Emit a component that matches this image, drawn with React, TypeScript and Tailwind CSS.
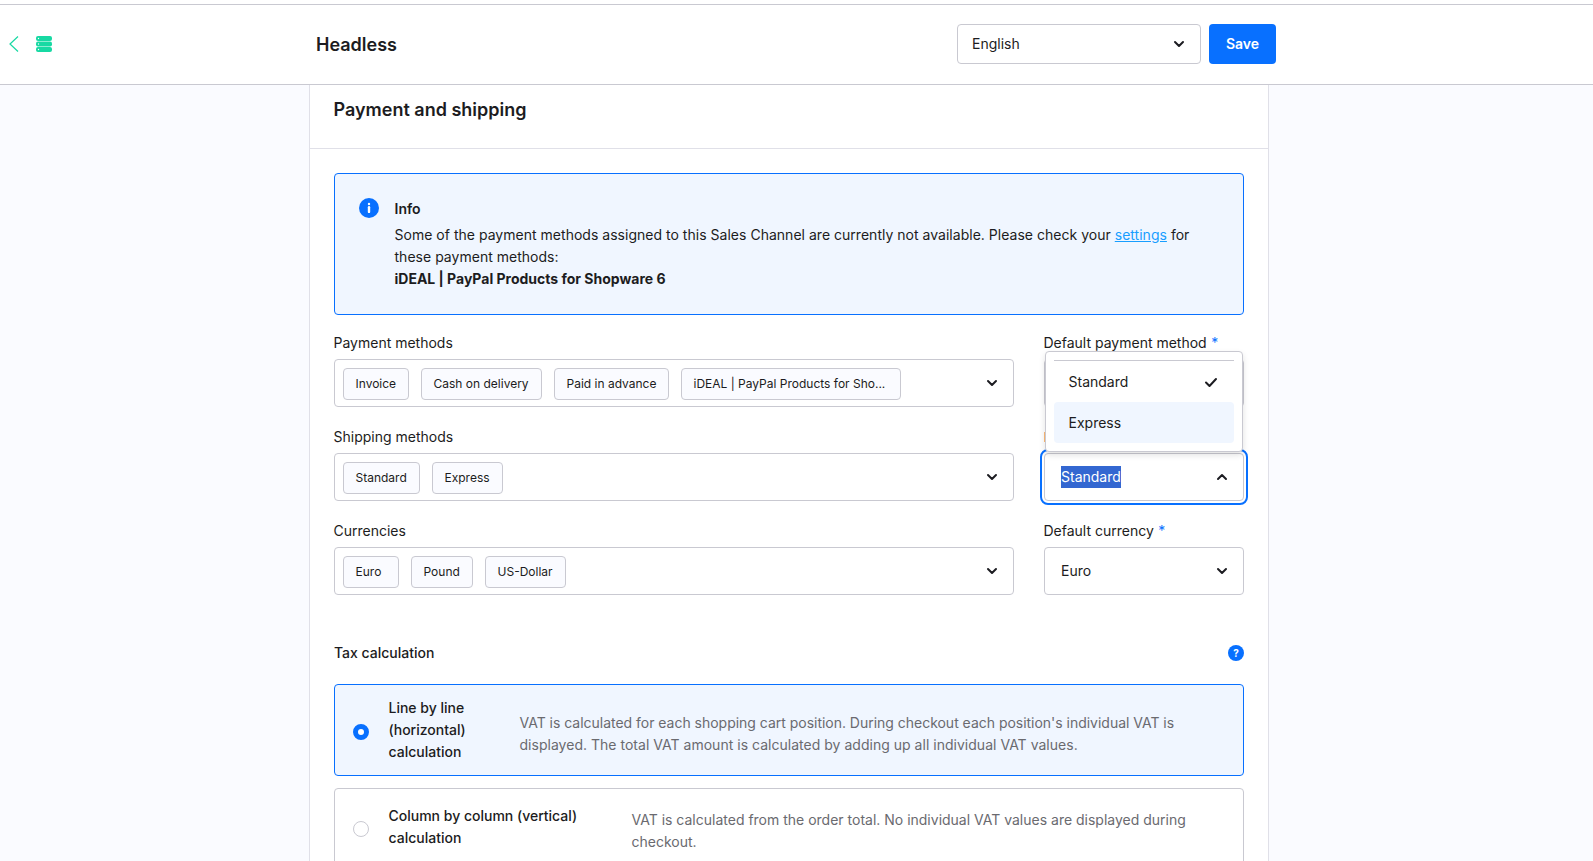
import { ReactNode } from 'react';

interface Tag {
    label: string;
    width: string;
}

const paymentTags: Tag[] = [
    { label: 'Invoice', width: 'w-[66px]' },
    { label: 'Cash on delivery', width: 'w-[121px]' },
    { label: 'Paid in advance', width: 'w-[115px]' },
    { label: 'iDEAL | PayPal Products for Sho...', width: 'w-[220px]' },
];

const shippingTags: Tag[] = [
    { label: 'Standard', width: 'w-[77px]' },
    { label: 'Express', width: 'w-[71px]' },
];

const currencyTags: Tag[] = [
    { label: 'Euro', width: 'w-[56px]' },
    { label: 'Pound', width: 'w-[62px]' },
    { label: 'US-Dollar', width: 'w-[81px]' },
];

const Chevron = ({ up = false }: { up?: boolean }) => (
    <svg
        viewBox="0 0 12 12"
        className={up ? 'w-3 h-3 shrink-0 rotate-180' : 'w-3 h-3 shrink-0'}
        fill="none"
        stroke="#1c1c21"
        strokeWidth="2"
        strokeLinecap="round"
        strokeLinejoin="round"
    >
        <path d="M2 4l4 4 4-4" />
    </svg>
);

const FieldLabel = ({ children, required = false }: { children: ReactNode; required?: boolean }) => (
    <div className="h-4 mb-2 -ml-[0.5px] leading-4 whitespace-nowrap">
        {children}
        {required && <span className="ml-[4.5px] text-[#0870ff]">*</span>}
    </div>
);

const MultiSelect = ({ label, tags }: { label: string; tags: Tag[] }) => (
    <div className="w-[680px]">
        <FieldLabel>{label}</FieldLabel>
        <div className="h-12 flex items-center justify-between pl-2 pr-[15px] bg-white border border-[#c9c9d1] rounded">
            <div className="flex gap-3 pt-0.5">
                {tags.map((tag) => (
                    <span
                        key={tag.label}
                        className={`${tag.width} h-8 pl-[11.5px] leading-[30px] text-xs whitespace-nowrap bg-[#fafbff] border border-[#c9c9d1] rounded`}
                    >
                        {tag.label}
                    </span>
                ))}
            </div>
            <Chevron />
        </div>
    </div>
);

const SingleSelect = ({ value = '', open = false }: { value?: string; open?: boolean }) => (
    <div
        className={`h-12 flex items-center justify-between px-4 pr-[15px] bg-white border border-[#c9c9d1] rounded ${
            open ? 'outline-2 outline-offset-2 outline-[#0870ff]' : ''
        }`}
    >
        {open ? <span className="bg-[#3367d1] text-white leading-[22px]">{value}</span> : <span>{value}</span>}
        <Chevron up={open} />
    </div>
);

const App = () => {
    return (
        <div className="h-[861px] pt-1 overflow-hidden bg-white text-sm text-[#1c1c21] font-['Inter',sans-serif]">
            {/* Page header */}
            <header className="h-[81px] flex items-center border-y border-[#c9c9d1] pb-px">
                <div className="w-[316px] flex items-center pl-[9px]">
                    <svg viewBox="0 0 10 16" className="w-2.5 h-4" fill="none" stroke="#17d9a3" strokeWidth="1.2">
                        <path d="M9 .5L1 8l8 7.5" />
                    </svg>
                    <svg viewBox="0 0 16 16" className="ml-[17px] w-4 h-4">
                        <rect width="16" height="4.9" rx="2" fill="#17d9a3" />
                        <rect y="5.55" width="16" height="4.9" rx="2" fill="#17d9a3" />
                        <rect y="11.1" width="16" height="4.9" rx="2" fill="#17d9a3" />
                        <circle cx="2.5" cy="2.5" r=".7" fill="#fff" />
                        <circle cx="2.5" cy="8" r=".7" fill="#fff" />
                        <circle cx="2.5" cy="13.5" r=".7" fill="#fff" />
                    </svg>
                </div>
                <h1 className="w-[641px] pt-0.5 text-lg leading-6 font-semibold">Headless</h1>
                <div className="w-[244px] h-10 flex items-center justify-between pl-[14px] pr-[15px] border border-[#c9c9d1] rounded">
                    <span>English</span>
                    <Chevron />
                </div>
                <button className="ml-2 w-[67px] h-10 bg-[#0870ff] text-white font-semibold rounded">Save</button>
            </header>

            <main className="h-[776px] pl-[309px] bg-[#fafbff] overflow-hidden">
                <div className="w-[960px] h-[900px] bg-white border-x border-[#e0e0e8]">
                    <div className="h-16 pt-[13px] px-[23.5px] border-b border-[#e0e0e8]">
                        <h2 className="text-lg leading-6 font-semibold">Payment and shipping</h2>
                    </div>

                    <div className="p-6">
                        {/* Info banner */}
                        <div className="h-[142px] flex gap-[15.5px] mb-5 pl-6 pt-6 pr-10 bg-[#f0f6ff] border border-[#0870ff] rounded">
                            <svg viewBox="0 0 20 20" className="w-5 h-5 shrink-0">
                                <circle cx="10" cy="10" r="10" fill="#0870ff" />
                                <circle cx="10" cy="6" r="1.2" fill="#fff" />
                                <path d="M10 9.3v4.6" stroke="#fff" strokeWidth="2.4" strokeLinecap="round" />
                            </svg>
                            <div className="leading-[22px]">
                                <div className="mb-1 font-semibold">Info</div>
                                <p className="tracking-[0.02px]">
                                    Some of the payment methods assigned to this Sales Channel are currently not available. Please check your{' '}
                                    <a className="text-[#189eff] underline" href="#">settings</a> for
                                    <br />
                                    these payment methods:
                                </p>
                                <b className="font-bold">iDEAL | PayPal Products for Shopware 6</b>
                            </div>
                        </div>

                        <div className="flex flex-col gap-[22px]">
                            <div className="flex gap-[30px]">
                                <MultiSelect label="Payment methods" tags={paymentTags} />
                                <div className="w-[200px]">
                                    <FieldLabel required>Default payment method</FieldLabel>
                                    <SingleSelect />
                                </div>
                            </div>
                            <div className="flex gap-[30px]">
                                <MultiSelect label="Shipping methods" tags={shippingTags} />
                                <div className="relative w-[200px] pt-6">
                                    <span className="absolute left-0 top-[3px] w-px h-2.5 bg-[#ffbb77]"></span>
                                    <SingleSelect value="Standard" open />
                                    {/* Opens upwards over the label */}
                                    <div className="absolute left-px bottom-[49px] w-[198px] h-[101px] p-2 bg-white border border-[#c9c9d1] rounded shadow-[0_3px_6px_rgba(0,0,0,0.12)]">
                                        <div className="border-t border-[#c9c9d1]">
                                            <div className="h-[41px] flex items-center justify-between pl-[14.5px] pr-4">
                                                Standard
                                                <svg viewBox="0 0 14 12" className="w-3.5 h-3" fill="none" stroke="#1c1c21" strokeWidth="2" strokeLinecap="round" strokeLinejoin="round">
                                                    <path d="M2 6.5l3.5 3.5L12 3" />
                                                </svg>
                                            </div>
                                            <div className="h-[41px] flex items-center pl-[14.5px] bg-[#f0f6ff] rounded">Express</div>
                                        </div>
                                    </div>
                                </div>
                            </div>
                            <div className="flex gap-[30px]">
                                <MultiSelect label="Currencies" tags={currencyTags} />
                                <div className="w-[200px]">
                                    <FieldLabel required>Default currency</FieldLabel>
                                    <SingleSelect value="Euro" />
                                </div>
                            </div>
                        </div>

                        {/* Tax calculation */}
                        <div className="mt-[47px] mb-5 h-[22px] flex items-center justify-between font-medium">
                            Tax calculation
                            <span className="w-4 h-4 rounded-full bg-[#0870ff] text-white text-[10px] leading-4 font-bold text-center">?</span>
                        </div>
                        <div className="h-[92px] flex items-center pl-[18px] mb-3 leading-[22px] bg-[#f0f6ff] border border-[#0870ff] rounded">
                            <span className="mt-1 w-4 h-4 rounded-full border-5 border-[#0870ff] bg-white"></span>
                            <div className="ml-[19.5px] w-[131px] font-medium">
                                Line by line
                                <br />
                                (horizontal)
                                <br />
                                calculation
                            </div>
                            <p className="mt-2 text-[#6a6a6f]">
                                <span className="tracking-[-0.02px]">
                                    VAT is calculated for each shopping cart position. During checkout each position's individual VAT is
                                </span>
                                <br />
                                <span className="tracking-[0.02px]">
                                    displayed. The total VAT amount is calculated by adding up all individual VAT values.
                                </span>
                            </p>
                        </div>
                        <div className="h-[78px] flex items-center pl-[18px] leading-[22px] border border-[#c9c9d1] rounded">
                            <span className="mt-1 w-4 h-4 rounded-full border border-[#c9c9d1] bg-white"></span>
                            <div className="ml-[19.5px] w-[243px] font-medium">
                                Column by column (vertical)
                                <br />
                                calculation
                            </div>
                            <p className="mt-2 text-[#6a6a6f]">
                                VAT is calculated from the order total. No individual VAT values are displayed during
                                <br />
                                checkout.
                            </p>
                        </div>
                    </div>
                </div>
            </main>
        </div>
    );
};

export default App;
